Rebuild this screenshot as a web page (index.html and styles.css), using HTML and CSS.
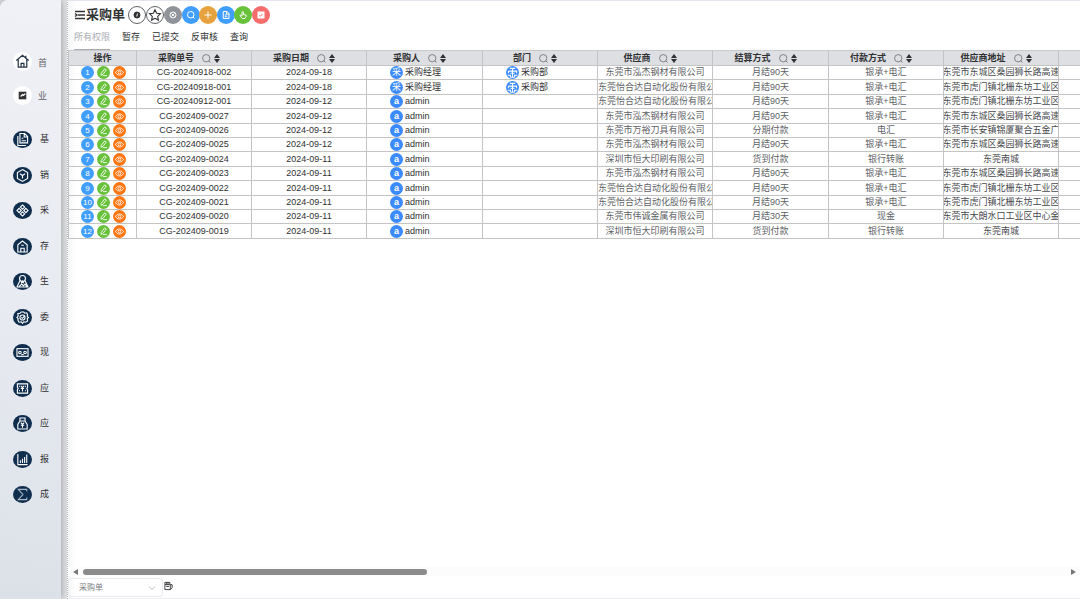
FILE: index.html
```html
<!DOCTYPE html>
<html lang="zh-CN">
<head>
<meta charset="utf-8">
<title>采购单</title>
<link rel="stylesheet" href="styles.css">
</head>
<body>
<svg class="defs" aria-hidden="true">
  <symbol id="search" viewBox="0 0 16 16"><circle cx="7.5" cy="7.5" r="6.5"/><path d="M12 12l3 3"/></symbol>
  <symbol id="edit" viewBox="0 0 16 16"><path d="M4 9.500L10 1.500l3 2-6 8L3.500 13zM7 13.500h7"/></symbol>
  <symbol id="eye" viewBox="0 0 16 16"><path d="M1 8c3-6 11-6 14 0-3 6-11 6-14 0z"/><circle cx="8" cy="8" r="2.500"/></symbol>
  <symbol id="org" viewBox="0 0 16 16"><path d="M4 2h8M8 2v12M2 6h12v3M2 6v3M5 9h6M1 12h4v3M11 15v-3h4M5 15h6"/></symbol>
</svg>
<div class="app">
  <nav class="side">
    <a class="item light" href="#"><span class="disc"><svg viewBox="0 0 20 20"><path d="M3.500 9L10 3.500 16.500 9M5.500 8v8h9V8M8.500 16v-4h3v4M13.500 4v2"/></svg></span><span>首</span></a>
    <a class="item light second" href="#"><span class="disc"><svg viewBox="0 0 20 20"><rect class="dark" x="6" y="6" width="8" height="8"/><path class="thin" d="M8 11l2-2 1 1 2-2"/></svg></span><span>业</span></a>
    <a class="item" href="#"><span class="disc"><svg viewBox="0 0 20 20"><path d="M7 3h5.500L16 6.500V14H7zM12 3v4h4M4.500 6v11H14M9 8.500h2M9 11.500h5"/></svg></span><span>基</span></a>
    <a class="item" href="#"><span class="disc"><svg viewBox="0 0 20 20"><path d="M10 3l6 3.500v7L10 17l-6-3.500v-7zM7 8l3 2 3-2M10 10v3.500"/></svg></span><span>销</span></a>
    <a class="item" href="#"><span class="disc"><svg viewBox="0 0 20 20"><path d="M10 3.500L12.500 6 10 8.500 7.500 6zM6 7.500L8.500 10 6 12.500 3.500 10zM14 7.500l2.500 2.500-2.500 2.500-2.500-2.500zM10 11.500l2.500 2.500-2.500 2.500L7.500 14z"/></svg></span><span>采</span></a>
    <a class="item" href="#"><span class="disc"><svg viewBox="0 0 20 20"><path d="M4.500 16.500V8L10 3.500 15.500 8v8.500zM8 16v-4h4v4M8.500 8.500h3"/></svg></span><span>存</span></a>
    <a class="item" href="#"><span class="disc"><svg viewBox="0 0 20 20"><circle cx="10" cy="6.500" r="3.500"/><path d="M7 9l-3.500 7.500h13L13 9M8.500 12L10 9.500l1.500 2.500M6 16l3-3 2 2 2-2 2 3"/></svg></span><span>生</span></a>
    <a class="item" href="#"><span class="disc"><svg viewBox="0 0 20 20"><path d="M8.500 3.500h3l1 1.500 2.500-.5 1 2.500-.5 1.500L17 10l-1.500 1.500.5 2.500-2.500 1.500-2-.5-1.500 2-1.500-2-2.500.5L4.500 13l.5-1.500L3.500 10 5 8l-.5-2.500L7 5z"/><circle cx="10" cy="10" r="3"/><path d="M8.500 10l1.500 1 2.500-3"/></svg></span><span>委</span></a>
    <a class="item" href="#"><span class="disc"><svg viewBox="0 0 20 20"><rect x="3.500" y="5.500" width="13" height="9"/><circle cx="7" cy="10" r="1.500"/><circle cx="13" cy="10" r="1.500"/><path d="M8.500 12.500h3"/></svg></span><span>现</span></a>
    <a class="item" href="#"><span class="disc"><svg viewBox="0 0 20 20"><path d="M4 4.500h12v4L15 10l1 1.500v4H4v-4L5 10 4 8.500zM8 7l2 2 2-2M8 10h4M10 9v4.500M6 7.500h1M6 12.500h1M13 7.500h1M13 12.500h1"/></svg></span><span>应</span></a>
    <a class="item" href="#"><span class="disc"><svg viewBox="0 0 20 20"><path d="M7 7V3.500h6V7zM7 7l-2.500 4v5.500h11V11L13 7M8 9l2 2 2-2M8 12h4M10 11v4"/></svg></span><span>应</span></a>
    <a class="item" href="#"><span class="disc"><svg viewBox="0 0 20 20"><path d="M4.500 3.500v12.500H16M7.500 14v-3M10 14V9M12.500 14V7M15 14V4"/></svg></span><span>报</span></a>
    <a class="item" href="#"><span class="disc"><svg viewBox="0 0 20 20"><path class="soft" d="M15 6.500V4H5l5.500 6L5 16h10v-2.500"/></svg></span><span>成</span></a>
  </nav>
  <main class="main">
    <header class="top">
      <svg class="burger" viewBox="0 0 10 10"><path d="M0 1.500h10M3 5h7M0 8.500h10M0 3.500L2 5 0 6.500"/></svg>
      <h1>采购单</h1>
      <div class="tools">
        <button class="tool outline" aria-label="说明"><svg viewBox="0 0 16 16"><circle class="fill" cx="8" cy="8" r="6"/><path class="w" d="M9 5L7.500 11"/></svg></button>
        <button class="tool outline star" aria-label="收藏"><svg viewBox="0 0 16 16"><path d="M8 1l2.200 4.600 5 .7-3.600 3.500.9 5L8 12.400 3.500 14.800l.9-5L.8 6.300l5-.7z"/></svg></button>
        <button class="tool gray" aria-label="设置"><svg viewBox="0 0 16 16"><circle cx="8" cy="8" r="6"/><path d="M5 5l6 6M11 5l-6 6"/></svg></button>
        <button class="tool blue" aria-label="搜索"><svg><use href="#search"/></svg></button>
        <button class="tool amber" aria-label="新增"><svg viewBox="0 0 16 16"><path d="M8 1v14M1 8h14"/></svg></button>
        <button class="tool blue" aria-label="文档"><svg viewBox="0 0 16 16"><path d="M2.500 1h7L14 5v10H2.500zM9 1v5h5M5.500 8h4M5.500 11.500h5"/></svg></button>
        <button class="tool green" aria-label="提交"><svg viewBox="0 0 16 16"><path d="M6 10V3c0-2.500 3-2.500 3 0v4l5 1c1 3-1 6-2 7H6.500C5 13 3 11 2 9c1-1.500 3 0 4 1"/></svg></button>
        <button class="tool red" aria-label="审核"><svg viewBox="0 0 16 16"><rect class="white" x="2" y="2" width="12" height="12"/><path class="r" d="M5 9l2 1.500L11 6"/></svg></button>
      </div>
    </header>
    <div class="tabs">
      <button class="tab current">所有权限</button><button class="tab">暂存</button><button class="tab">已提交</button><button class="tab">反审核</button><button class="tab">查询</button>
    </div>
    <div class="grid">
      <table>
        <colgroup><col class="c-op"><col class="c"><col class="c"><col class="c wide"><col class="c"><col class="c"><col class="c wide"><col class="c"><col class="c"><col class="c"></colgroup>
        <thead><tr id="head"></tr></thead>
        <tbody id="rows"></tbody>
      </table>
    </div>
    <div class="scroll"><span class="arrow left"></span><span class="track"><span class="thumb"></span></span><span class="arrow right"></span></div>
    <footer class="foot">
      <div class="pick"><select aria-label="单据"><option>采购单</option></select><svg viewBox="0 0 8 8"><path d="M1 2.500l3 3 3-3"/></svg></div>
      <button class="copy" aria-label="复制"><svg viewBox="0 0 10 10"><path d="M1 1h5.500v2.500H1zM1 3.500V9h6V3.500M7 3.500h2V7L7 9M3 1v2.500M4.500 1v2.500M2.500 5.500h3"/></svg></button>
    </footer>
  </main>
</div>
<script src="app.js"></script>
</body>
</html>
```
FILE: styles.css
```css
* { box-sizing: border-box; }
body {
  margin: 0;
  font-family: "Liberation Sans", "Noto Sans CJK SC", sans-serif;
  font-size: 9px;
  color: #303133;
  background: #e2e3e5;
}
button, select { font: inherit; color: inherit; border: 0; padding: 0; background: none; }
svg { display: block; fill: none; stroke: currentColor; overflow: visible; }
.defs { width: 0; height: 0; position: absolute; }
.app { display: flex; height: 100vh; overflow: hidden; }

.side {
  flex: none;
  width: 61px;
  padding: 51px 0 0 13px;
  background: linear-gradient(10deg, #dce1e8, #e8ebf1 50%, #f0f1f6);
  border-top-left-radius: 8px;
  box-shadow: 0 0 8px #8f9296;
}
.item { display: flex; align-items: center; height: 20px; margin-bottom: 16px; gap: 8px; color: #303133; text-decoration: none; line-height: 12px; }
.item:nth-child(4n), .item:nth-child(4n+2) { margin-bottom: 15px; }
.item.light { margin-bottom: 14px; gap: 6px; color: #606266; }
.item.light > span:last-child { padding-top: 4px; }
.item.light.second { margin-bottom: 24px; }
.item.second > span:last-child { padding-top: 1px; }
.disc { display: grid; place-items: center; width: 19px; height: 17px; border-radius: 50%; background: #0f2d4d; color: #fff; }
.light .disc { height: 19px; background: #fff; color: #253445; }
.disc svg { width: 17px; height: 17px; stroke-width: 1.3; }
.light .disc svg { width: 19px; height: 19px; }
.disc .dark { fill: #303133; stroke: none; }
.disc .thin { stroke: #fff; }
.disc .soft { stroke: #a9b8c6; }

.main {
  flex: 1;
  min-width: 0;
  display: flex;
  flex-direction: column;
  margin-left: 6px;
  border-left: 1px dotted #b8babd;
  border-top: 1px solid #e3e5ee;
  background: linear-gradient(90deg, #f5f5f5, #fff 8px);
}
.top { display: flex; align-items: center; height: 27px; padding-left: 7px; }
.burger { width: 10px; height: 10px; margin-right: 1px; stroke-width: 1.3; }
h1 { margin: 0; font-size: 13px; line-height: 20px; }
.tools { display: flex; margin-left: 3px; }
.tool { display: grid; place-items: center; width: 18px; height: 18px; border-radius: 50%; color: #fff; }
.tool:nth-child(2n+5) { margin-left: -1px; }
.tool svg { width: 8px; height: 8px; stroke-width: 2; }
.outline { border: 1px solid #606266; background: #fff; color: #303133; }
.outline .fill { fill: #303133; }
.outline .w { stroke: #fff; }
.star svg { width: 12px; height: 12px; stroke-width: 1.5; }
.gray { background: #909399; }
.blue { background: #409eff; }
.amber { background: #e6a23c; }
.green { background: #67c23a; }
.red { background: #f56c6c; }
.red .white { fill: #fff; }
.red .r { stroke: #f56c6c; }
.tabs { display: flex; gap: 12px; height: 22px; padding-left: 6px; }
.tab { height: 22px; padding-bottom: 2px; line-height: 19px; border-bottom: 1px solid transparent; }
.current { color: #a8abb2; border-bottom-color: #a8abb2; }

.grid { flex: 1; min-height: 0; overflow: hidden; border-top: 1px solid #c9cacd; }
table { width: 1105px; table-layout: fixed; border-collapse: separate; border-spacing: 0; }
.c-op { width: 69px; }
.c { width: 115px; }
.c.wide { width: 116px; }
th, td { height: 14px; padding: 0; border: solid #c4c4c6; border-width: 0 1px 1px 0; text-align: center; overflow: hidden; white-space: nowrap; line-height: 13px; }
th:first-child, td:first-child { border-left-width: 1px; }
tbody tr:nth-child(5n+2) td, tbody tr:nth-child(5n+4) td { height: 15px; }
th { height: 15px; background: #dedfe3; line-height: 14px; }
td.soft { color: #606266; }
td.addr { color: #484a4f; }
.cell { display: flex; align-items: center; justify-content: center; height: 13px; }
.cell.start { justify-content: flex-start; padding-left: 23px; gap: 2px; }
.cell.clip { justify-content: flex-start; }
.cell.ops { gap: 3px; padding-left: 2px; }
.hcell { display: flex; align-items: center; justify-content: center; height: 14px; padding-right: 10px; }
.hcell svg { width: 9px; height: 9px; margin: 0 3px 0 8px; color: #606266; stroke-width: 1.3; }
.sort { display: grid; gap: 1px; }
.sort::before, .sort::after { content: ""; border: 3px solid transparent; }
.sort::before { border-top: 0; border-bottom: 4px solid #303133; }
.sort::after { border-bottom: 0; border-top: 4px solid #303133; }
.dot { display: grid; place-items: center; flex: none; width: 13px; height: 13px; border-radius: 50%; color: #fff; background: #409eff; font-size: 8px; line-height: 13px; overflow: hidden; }
.dot svg { width: 9px; height: 9px; stroke-width: 1.5; }
.dot.edit { background: #67c23a; }
.dot.view { background: #ff7612; }
.dot.user { background: #3b8bff; font-size: 9px; }
.dot.user svg { width: 11px; height: 11px; }
.dot.latin { font-weight: bold; }

.scroll { display: flex; align-items: center; height: 9px; padding: 0 4px 0 5px; background: #fcfcfc; }
.track { flex: 1; margin: 0 5px; }
.thumb { display: block; width: 35%; height: 6px; border-radius: 3px; background: #8b8b8b; }
.arrow { border: 3px solid transparent; }
.arrow.left { border-left: 0; border-right: 5px solid #777; }
.arrow.right { border-right: 0; border-left: 5px solid #777; }
.foot { display: flex; height: 23px; gap: 1px; border-bottom: 1px solid #eceef2; }
.pick { position: relative; width: 95px; height: 19px; margin-top: 2px; border: 1px solid #e9eaee; border-radius: 3px; }
.pick select { width: 100%; height: 100%; padding-left: 10px; appearance: none; color: #7b7d82; font-size: 8px; }
.pick svg { position: absolute; right: 6px; top: 5px; width: 8px; height: 8px; color: #b9bcc4; pointer-events: none; }
.copy { width: 9px; height: 20px; }
.copy svg { width: 9px; height: 10px; }
```
FILE: app.js
```js
const heads = ["采购单号", "采购日期", "采购人", "部门", "供应商", "结算方式", "付款方式", "供应商地址"];
const A = "东莞市东城区桑园狮长路高速", B = "东莞市虎门镇北栅东坊工业区", S = "东莞市泓杰钢材有限公司", Y = "东莞怡合达自动化股份有限公";
const rows = [
  ["CG-20240918-002", "18", 1, S, "月结90天", "银承+电汇", A],
  ["CG-20240918-001", "18", 1, Y, "月结90天", "银承+电汇", B],
  ["CG-20240912-001", "12", 0, Y, "月结90天", "银承+电汇", B],
  ["CG-202409-0027", "12", 0, S, "月结90天", "银承+电汇", A],
  ["CG-202409-0026", "12", 0, "东莞市万裕刀具有限公司", "分期付款", "电汇", "东莞市长安镇锦厦聚合五金广"],
  ["CG-202409-0025", "12", 0, S, "月结90天", "银承+电汇", A],
  ["CG-202409-0024", "11", 0, "深圳市恒大印刷有限公司", "货到付款", "银行转账", "东莞南城"],
  ["CG-202409-0023", "11", 0, S, "月结90天", "银承+电汇", A],
  ["CG-202409-0022", "11", 0, Y, "月结90天", "银承+电汇", B],
  ["CG-202409-0021", "11", 0, Y, "月结90天", "银承+电汇", B],
  ["CG-202409-0020", "11", 0, "东莞市伟诚金属有限公司", "月结30天", "现金", "东莞市大朗水口工业区中心金"],
  ["CG-202409-0019", "11", 0, "深圳市恒大印刷有限公司", "货到付款", "银行转账", "东莞南城"]
];
const cell = (html, cls = "") => `<div class="cell ${cls}">${html}</div>`;
document.getElementById("head").innerHTML = "<th>操作</th>" +
  heads.map(h => `<th><div class="hcell">${h}<svg><use href="#search"/></svg><span class="sort"></span></div></th>`).join("") + "<th></th>";
document.getElementById("rows").innerHTML = rows.map(([no, day, mgr, sup, settle, pay, addr], i) => `<tr>
<td>${cell(`<span class="dot">${i + 1}</span><button class="dot edit" aria-label="编辑"><svg><use href="#edit"/></svg></button><button class="dot view" aria-label="查看"><svg><use href="#eye"/></svg></button>`, "ops")}</td>
<td>${cell(no)}</td><td>${cell("2024-09-" + day)}</td>
<td>${cell(mgr ? '<span class="dot user">采</span>采购经理' : '<span class="dot user latin">a</span>admin', "start")}</td>
<td>${mgr ? cell('<span class="dot user"><svg><use href="#org"/></svg></span>采购部', "start") : ""}</td>
<td class="soft">${cell(sup, sup === Y ? "clip" : "")}</td><td class="soft">${cell(settle)}</td><td class="soft">${cell(pay)}</td>
<td class="addr">${cell(addr)}</td><td></td></tr>`).join("");
```
